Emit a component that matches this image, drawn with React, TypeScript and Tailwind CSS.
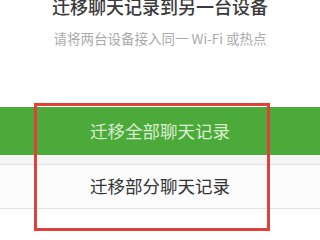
export default function App() {
  return (
    <div
      className="relative h-[240px] w-[320px] overflow-hidden bg-white"
      style={{ fontFamily: '"Noto Sans CJK SC", "Liberation Sans", sans-serif' }}
    >
      {/* header text */}
      <div className="mt-[-7px] flex flex-col items-center">
        <h1 className="text-[18px] leading-[26px] font-medium text-[#3a3a3a]">
          迁移聊天记录到另一台设备
        </h1>
        <p className="mt-[10px] text-[13.5px] leading-[18px] text-[#ababab]">
          请将两台设备接入同一 Wi-Fi 或热点
        </p>
      </div>

      {/* buttons */}
      <div className="mt-[60px] flex flex-col bg-[#f4f4f4]">
        <button className="h-[48px] w-full bg-[#4caa3b] text-[17.5px] text-[#d9efcf]">
          迁移全部聊天记录
        </button>
        <div className="h-[9px]" />
        <button className="h-[45px] w-full border-y border-[#e2e2e2] bg-[#fcfcfc] text-[17.5px] text-[#333]">
          迁移部分聊天记录
        </button>
      </div>
      <div className="h-[30px] bg-white" />

      {/* annotation box */}
      <div className="absolute left-[34px] top-[103px] h-[128px] w-[236px] border-[3px] border-[#e0413d]" />
    </div>
  );
}
